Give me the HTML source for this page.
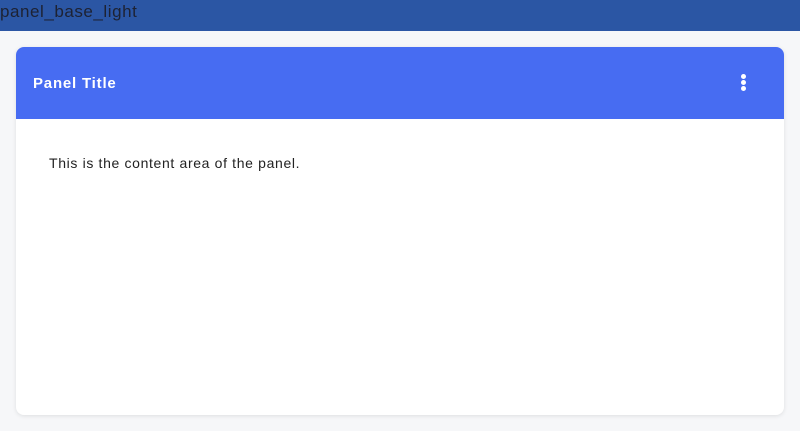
<!DOCTYPE html><html><head><style>
body{margin:0;width:800px;height:431px;background:#f6f7f9;font-family:"Liberation Sans",sans-serif;overflow:hidden;position:relative}
.top{position:absolute;left:0;top:0;width:800px;height:31px;background:#2b56a4;color:#1d2233;font-size:17px;line-height:24px;letter-spacing:0.55px}
.panel{position:absolute;left:16px;top:47px;width:768px;height:368px;background:#fff;border-radius:8px;box-shadow:0 1px 4px rgba(0,0,0,.1);overflow:hidden}
.hd{height:72px;background:#476cf2;color:#fff;font-weight:bold;font-size:15px;line-height:74px;padding-left:17px;position:relative;letter-spacing:0.8px}
.d{position:absolute;left:725px;width:5px;height:5px;border-radius:50%;background:#fff}
.c{padding:36px 0 0 33px;font-size:14px;color:#222;letter-spacing:0.65px}
</style></head><body>
<div class="top">panel_base_light</div>
<div class="panel"><div class="hd">Panel Title<div class="d" style="top:27px"></div><div class="d" style="top:33px"></div><div class="d" style="top:39px"></div></div>
<div class="c">This is the content area of the panel.</div></div>
</body></html>
